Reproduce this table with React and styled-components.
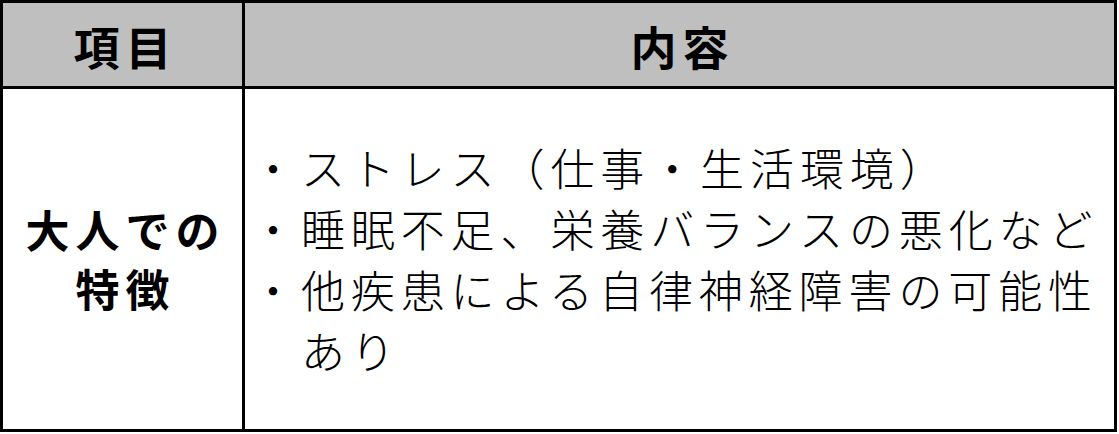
import React from "react";
import styled, { createGlobalStyle } from "styled-components";

const Global = createGlobalStyle`
  html, body { margin: 0; padding: 0; background: #fff; }
  body { font-family: "Noto Sans CJK JP", "Noto Sans", sans-serif; color: #000; }
`;

const Table = styled.div`
  box-sizing: border-box;
  width: 1117px;
  height: 432px;
  border: 3px solid #000;
  display: grid;
  grid-template-columns: 242px 1fr;
  grid-template-rows: 86px 1fr;
`;

const Cell = styled.div`
  box-sizing: border-box;
  display: flex;
  align-items: center;
  justify-content: ${(p) => (p.$left ? "flex-start" : "center")};
  background: ${(p) => (p.$head ? "#bfbfbf" : "#fff")};
  border-right: ${(p) => (p.$first ? "3px solid #000" : "none")};
  border-bottom: ${(p) => (p.$head ? "3px solid #000" : "none")};
  padding-left: ${(p) => (p.$left ? "6px" : "0")};
`;

const HeadText = styled.div`
  font-size: 46px;
  font-weight: 700;
  letter-spacing: 6px;
  margin-right: -6px;
  line-height: 1;
`;

const Label = styled.div`
  font-size: 44px;
  font-weight: 700;
  letter-spacing: 6px;
  margin-right: -6px;
  line-height: 59px;
  text-align: center;
`;

const List = styled.div`
  display: flex;
  flex-direction: column;
  font-size: 44px;
  font-weight: 300;
  letter-spacing: 5.9px;
  line-height: 61px;
  white-space: nowrap;
`;

const Item = styled.div`
  display: flex;
`;

const Bullet = styled.span`
  flex: none;
`;

const ItemText = styled.span``;

const items = [
  ["ストレス（仕事・生活環境）"],
  ["睡眠不足、栄養バランスの悪化など"],
  ["他疾患による自律神経障害の可能性", "あり"],
];

export default function App() {
  return (
    <>
      <Global />
      <Table>
        <Cell $head $first>
          <HeadText>項目</HeadText>
        </Cell>
        <Cell $head>
          <HeadText>内容</HeadText>
        </Cell>
        <Cell $first>
          <Label>
            大人での
            <br />
            特徴
          </Label>
        </Cell>
        <Cell $left>
          <List>
            {items.map((lines, i) => (
              <Item key={i}>
                <Bullet>・</Bullet>
                <ItemText>
                  {lines.map((l, j) => (
                    <React.Fragment key={j}>
                      {j > 0 && <br />}
                      {l}
                    </React.Fragment>
                  ))}
                </ItemText>
              </Item>
            ))}
          </List>
        </Cell>
      </Table>
    </>
  );
}
